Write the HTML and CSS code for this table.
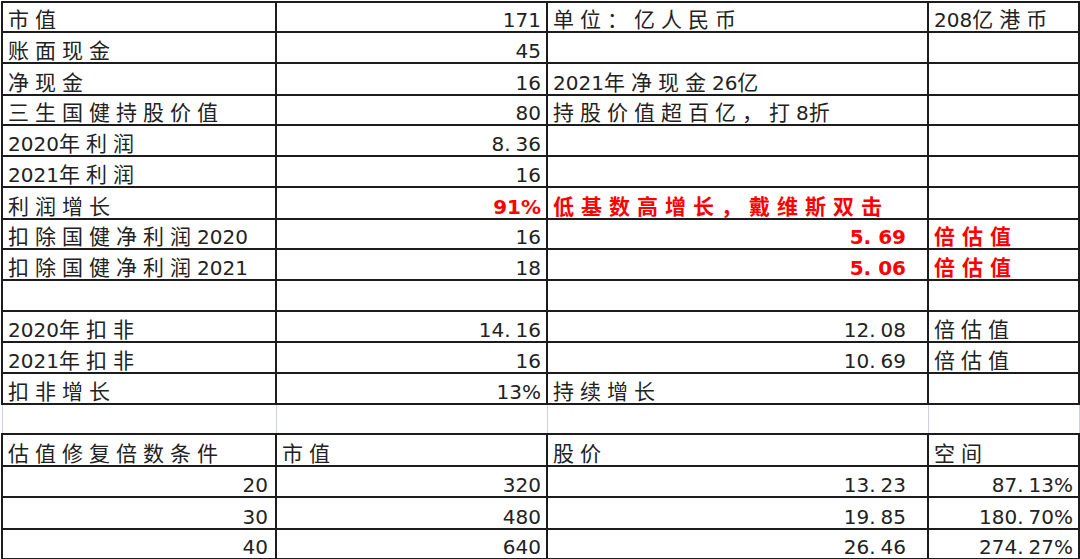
FILE: index.html
```html
<!DOCTYPE html>
<html lang="zh-CN">
<head>
<meta charset="utf-8">
<title>估值表</title>
<link rel="stylesheet" href="styles.css">
</head>
<body>
<table class="sheet">
  <colgroup>
    <col class="c1"><col class="c2"><col class="c3"><col class="c4">
  </colgroup>
  <tbody>
    <tr><td>市值</td><td class="r"><span class="d">171</span></td><td>单位：亿人民币</td><td><span class="d">208</span>亿港币</td></tr>
    <tr><td>账面现金</td><td class="r"><span class="d">45</span></td><td></td><td></td></tr>
    <tr><td>净现金</td><td class="r"><span class="d">16</span></td><td><span class="d">2021</span>年净现金<span class="d">26</span>亿</td><td></td></tr>
    <tr><td>三生国健持股价值</td><td class="r"><span class="d">80</span></td><td>持股价值超百亿，打<span class="d">8</span>折</td><td></td></tr>
    <tr><td><span class="d">2020</span>年利润</td><td class="r"><span class="d">8<span class="pt">.</span>36</span></td><td></td><td></td></tr>
    <tr><td><span class="d">2021</span>年利润</td><td class="r"><span class="d">16</span></td><td></td><td></td></tr>
    <tr><td>利润增长</td><td class="r hot"><span class="d">91%</span></td><td class="hot">低基数高增长，戴维斯双击</td><td></td></tr>
    <tr><td>扣除国健净利润<span class="d">2020</span></td><td class="r"><span class="d">16</span></td><td class="r3 hot"><span class="d">5<span class="pt">.</span>69</span></td><td class="hot">倍估值</td></tr>
    <tr><td>扣除国健净利润<span class="d">2021</span></td><td class="r"><span class="d">18</span></td><td class="r3 hot"><span class="d">5<span class="pt">.</span>06</span></td><td class="hot">倍估值</td></tr>
    <tr><td></td><td></td><td></td><td></td></tr>
    <tr><td><span class="d">2020</span>年扣非</td><td class="r"><span class="d">14<span class="pt">.</span>16</span></td><td class="r3"><span class="d">12<span class="pt">.</span>08</span></td><td>倍估值</td></tr>
    <tr><td><span class="d">2021</span>年扣非</td><td class="r"><span class="d">16</span></td><td class="r3"><span class="d">10<span class="pt">.</span>69</span></td><td>倍估值</td></tr>
    <tr><td>扣非增长</td><td class="r"><span class="d">13%</span></td><td>持续增长</td><td></td></tr>
    <tr class="gap"><td></td><td></td><td></td><td></td></tr>
    <tr><td>估值修复倍数条件</td><td>市值</td><td>股价</td><td>空间</td></tr>
    <tr><td class="r1"><span class="d">20</span></td><td class="r"><span class="d">320</span></td><td class="r3"><span class="d">13<span class="pt">.</span>23</span></td><td class="r"><span class="d">87<span class="pt">.</span>13%</span></td></tr>
    <tr><td class="r1"><span class="d">30</span></td><td class="r"><span class="d">480</span></td><td class="r3"><span class="d">19<span class="pt">.</span>85</span></td><td class="r"><span class="d">180<span class="pt">.</span>70%</span></td></tr>
    <tr><td class="r1"><span class="d">40</span></td><td class="r"><span class="d">640</span></td><td class="r3"><span class="d">26<span class="pt">.</span>46</span></td><td class="r"><span class="d">274<span class="pt">.</span>27%</span></td></tr>
  </tbody>
</table>
</body>
</html>
```

FILE: styles.css
```css
html, body {
  margin: 0;
  padding: 0;
  background: #ffffff;
}

.sheet {
  border-collapse: collapse;
  table-layout: fixed;
  width: 1079px;
  margin: 1px 0 0 1px;
  color: #222222;
  font-family: "Noto Sans CJK SC", "Noto Sans", sans-serif;
  font-size: 21px;
}

.c1 { width: 274px; }
.c2 { width: 271px; }
.c3 { width: 381px; }
.c4 { width: 151px; }

.sheet tr { height: 31px; }
.sheet tr:nth-child(1),
.sheet tr:nth-child(4),
.sheet tr:nth-child(8),
.sheet tr:nth-child(14),
.sheet tr:nth-child(18) { height: 30px; }
.sheet tr:nth-child(3),
.sheet tr:nth-child(7),
.sheet tr:nth-child(15),
.sheet tr:nth-child(17) { height: 32px; }

.sheet td {
  border: 2px solid #1c1c1c;
  padding: 0 0 0 5px;
  line-height: 26px;
  vertical-align: bottom;
  letter-spacing: 6px;
  white-space: nowrap;
}

.sheet tr.gap td {
  border-left: 1px solid #c9d2e6;
  border-right: 1px solid #c9d2e6;
  border-top: 2px solid #1c1c1c;
  border-bottom: 2px solid #1c1c1c;
}

.d {
  font-family: "DejaVu Sans", "Liberation Sans", sans-serif;
  font-size: 20px;
  letter-spacing: 0;
  line-height: 21px;
}

.pt { letter-spacing: 5px; }

.sheet td.r { text-align: right; padding-right: 5px; padding-left: 0; }
.sheet td.r1 { text-align: right; padding-right: 7px; padding-left: 0; }
.sheet td.r3 { text-align: right; padding-right: 21px; padding-left: 0; }

.sheet td.hot {
  color: #ff0000;
  font-weight: 700;
  letter-spacing: 7px;
}
.sheet td.hot .d {
  letter-spacing: 0;
}
.sheet td.hot .pt { letter-spacing: 7px; }
```
